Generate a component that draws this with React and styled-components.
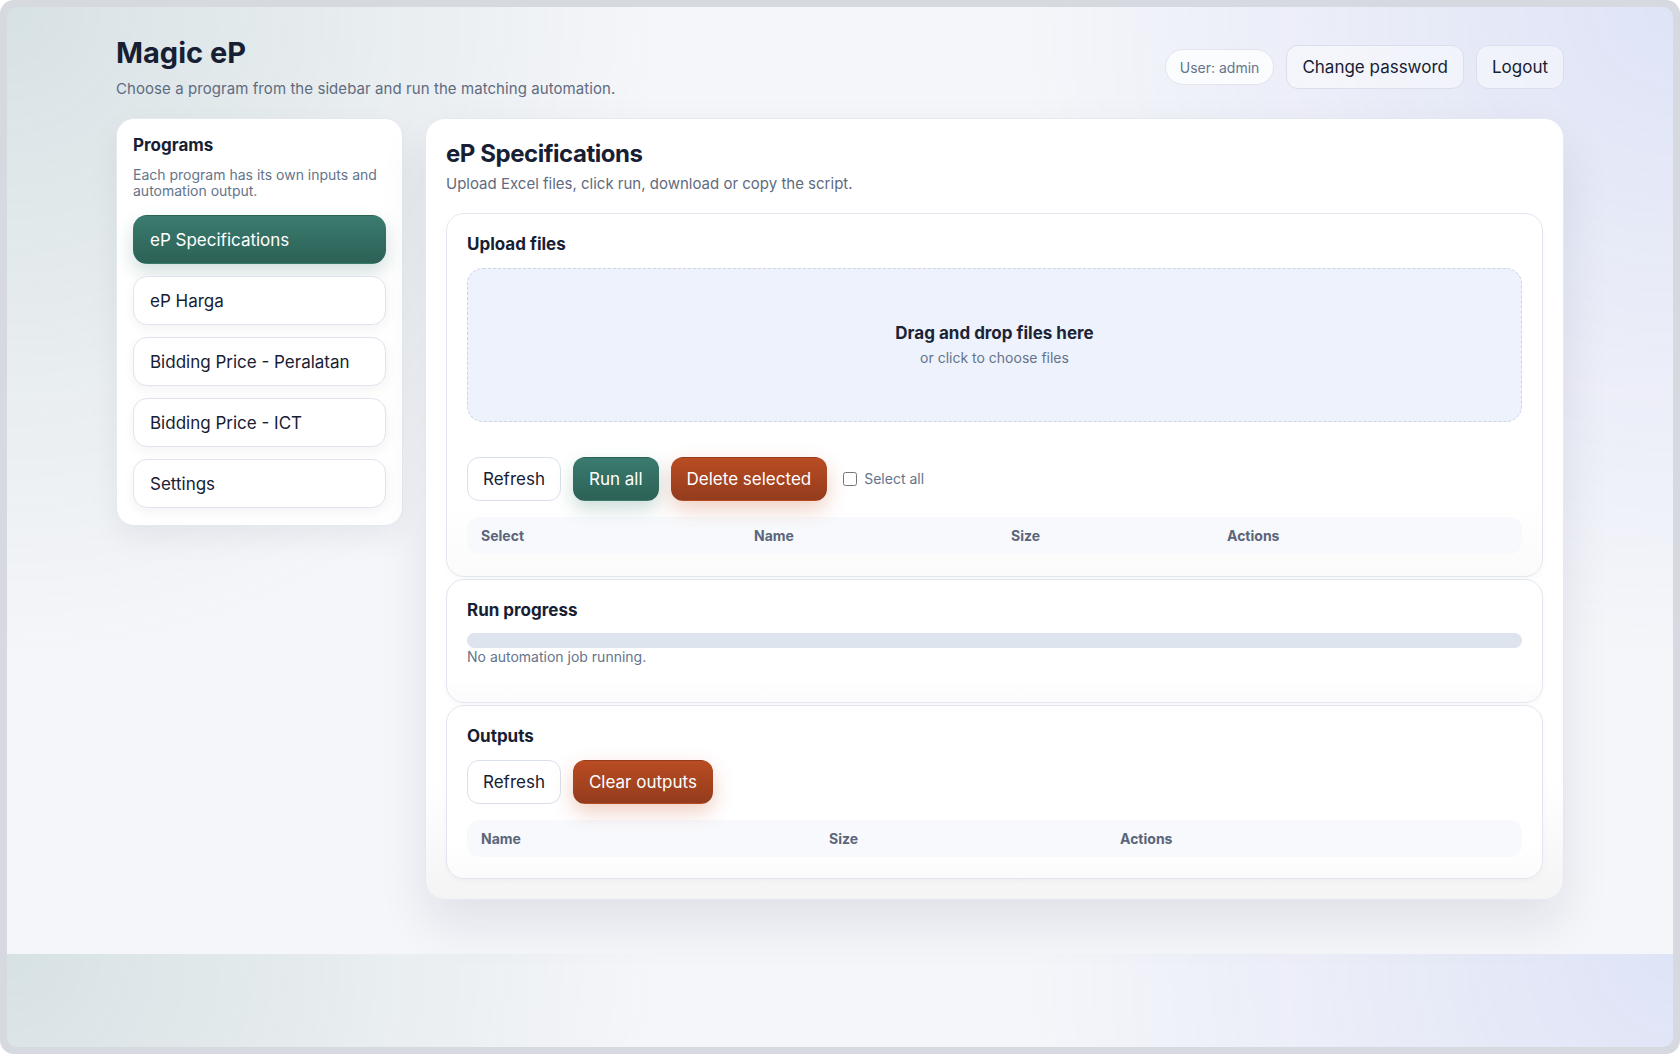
import React from "react";
import styled, { createGlobalStyle, css } from "styled-components";

const GlobalStyle = createGlobalStyle`
  html, body, #root {
    height: 100%;
  }
  body {
    margin: 0;
    background: #ffffff;
    font-family: Inter, "Noto Sans", "Liberation Sans", sans-serif;
    color: #172033;
    -webkit-font-smoothing: antialiased;
  }
  * {
    box-sizing: border-box;
  }
`;

const Frame = styled.div`
  height: 100%;
  padding: 7px;
  background: #d7d9e0;
  border-radius: 14px;
`;

const Viewport = styled.div`
  height: 100%;
  border-radius: 10px;
  overflow: hidden;
  background:
    radial-gradient(circle at 0 0, rgba(47, 111, 98, 0.15), rgba(47, 111, 98, 0) 34%),
    radial-gradient(circle at 100% 0, rgba(72, 104, 224, 0.13), rgba(72, 104, 224, 0) 34%),
    #f5f6fa;
  background-size: 100% 947px;
`;

const Page = styled.div`
  max-width: 1448px;
  margin: 0 auto;
  padding-top: 29px;
`;

const Header = styled.header`
  display: flex;
  align-items: center;
  justify-content: space-between;
  margin-bottom: 20px;
`;

const Brand = styled.h1`
  margin: 0;
  font-size: 29px;
  line-height: 34px;
  font-weight: 700;
  color: #172033;
`;

const Lead = styled.p`
  margin: 10px 0 0;
  font-size: 15px;
  line-height: 18px;
  letter-spacing: 0.07px;
  color: #5f6b80;
`;

const HeaderActions = styled.div`
  display: flex;
  align-items: center;
  gap: 12px;
`;

const UserPill = styled.span`
  display: inline-flex;
  align-items: center;
  height: 36px;
  padding: 0 14px;
  border: 1px solid #dfe4ee;
  border-radius: 999px;
  background: #fbfcfe;
  font-size: 14px;
  color: #64748b;
`;

const buttonTone = {
  ghost: css`
    background: rgba(255, 255, 255, 0.45);
    border-color: #d9dfec;
    color: #172033;
  `,
  secondary: css`
    background: #ffffff;
    border-color: #d9e0ec;
    color: #172033;
  `,
  primary: css`
    background: linear-gradient(180deg, #3b7b6f 0%, #2c6156 100%);
    border-color: transparent;
    color: #ffffff;
    box-shadow: 0 8px 18px rgba(47, 111, 98, 0.24);
  `,
  danger: css`
    background: linear-gradient(180deg, #b94c23 0%, #933c1d 100%);
    border-color: transparent;
    color: #ffffff;
    box-shadow: 0 8px 20px rgba(196, 82, 38, 0.28);
  `,
};

const Button = styled.button`
  height: 44px;
  padding: 0 15px;
  border: 1px solid transparent;
  border-radius: 12px;
  font-family: inherit;
  font-size: 17px;
  line-height: 1.2;
  cursor: pointer;
  ${({ $tone }) => buttonTone[$tone || "secondary"]}
`;

const Layout = styled.div`
  display: grid;
  grid-template-columns: 287px 1fr;
  gap: 22px;
  align-items: start;
`;

const Sidebar = styled.aside`
  padding: 16px 16px 17px;
  background: #ffffff;
  border: 1px solid #e3e8f1;
  border-radius: 18px;
  box-shadow: 0 12px 30px rgba(15, 23, 42, 0.06);
`;

const SideTitle = styled.h2`
  margin: 0;
  font-size: 17px;
  line-height: 21px;
  font-weight: 700;
`;

const SideNote = styled.p`
  margin: 11px 0 16px;
  font-size: 14px;
  line-height: 16px;
  color: #64748b;
`;

const NavList = styled.nav`
  display: flex;
  flex-direction: column;
  gap: 12px;
`;

const NavItem = styled.button`
  height: 49px;
  padding: 0 16px;
  text-align: left;
  font-family: inherit;
  font-size: 17px;
  border-radius: 14px;
  cursor: pointer;
  border: 1px solid ${({ $active }) => ($active ? "transparent" : "#dfe4ef")};
  color: ${({ $active }) => ($active ? "#ffffff" : "#172033")};
  background: ${({ $active }) =>
    $active ? "linear-gradient(180deg, #3b7b6f 0%, #2c6156 100%)" : "#ffffff"};
  box-shadow: ${({ $active }) =>
    $active ? "0 8px 18px rgba(47, 111, 98, 0.22)" : "0 4px 12px rgba(15, 23, 42, 0.05)"};
`;

const Panel = styled.main`
  padding: 20px;
  border: 1px solid #e3e8f1;
  border-radius: 20px;
  background: linear-gradient(180deg, #ffffff 0%, #ffffff 85%, #f4f4f5 100%);
  box-shadow: 0 24px 50px rgba(15, 23, 42, 0.09);
`;

const PanelTitle = styled.h2`
  margin: 0;
  padding-top: 1px;
  font-size: 24px;
  line-height: 1.2;
  font-weight: 700;
  letter-spacing: -0.45px;
`;

const PanelLead = styled.p`
  margin: 6px 0 20px;
  font-size: 15px;
  line-height: 18px;
  color: #5f6b80;
`;

const Sections = styled.div`
  display: flex;
  flex-direction: column;
  gap: 2px;
`;

const Section = styled.section`
  padding: ${({ $pad }) => $pad || "20px"};
  border: 1px solid #e1e6ef;
  border-radius: 18px;
  background: linear-gradient(180deg, #ffffff 0%, #ffffff 80%, #fbfbfc 100%);
  box-shadow: 0 2px 6px rgba(15, 23, 42, 0.03);
`;

const SectionTitle = styled.h3`
  margin: 0 0 14px;
  font-size: 17px;
  line-height: 20px;
  font-weight: 700;
`;

const DropZone = styled.div`
  height: 154px;
  display: flex;
  flex-direction: column;
  align-items: center;
  justify-content: center;
  border: 1.5px dashed #cbd4e6;
  border-radius: 16px;
  background: #eef2fc;
  cursor: pointer;
`;

const DropTitle = styled.div`
  font-size: 17px;
  line-height: 1.2;
  font-weight: 700;
  color: #1b2435;
`;

const DropHint = styled.div`
  margin-top: 6px;
  font-size: 14px;
  line-height: 17px;
  color: #64748b;
`;

const Toolbar = styled.div`
  display: flex;
  align-items: center;
  gap: 12px;
  margin-top: ${({ $top }) => $top || "0"};
`;

const CheckLabel = styled.label`
  display: inline-flex;
  align-items: center;
  gap: 7px;
  margin-left: 4px;
  font-size: 14px;
  color: #64748b;
`;

const Check = styled.input`
  width: 14px;
  height: 14px;
  margin: 0;
`;

const TableHead = styled.div`
  display: grid;
  grid-template-columns: ${({ $cols }) => $cols};
  margin-top: 16px;
  padding: 10px 14px;
  border-radius: 12px;
  background: #f7f9fd;
  font-size: 14px;
  line-height: 17px;
  font-weight: 700;
  color: #5b6579;
`;

const Track = styled.div`
  height: 15px;
  margin-top: -1px;
  border-radius: 999px;
  background: #dde4ee;
`;

const Status = styled.div`
  margin-bottom: 17px;
  font-size: 14px;
  line-height: 17px;
  color: #64748b;
`;

const programs = [
  "eP Specifications",
  "eP Harga",
  "Bidding Price - Peralatan",
  "Bidding Price - ICT",
  "Settings",
];

export default function App() {
  return (
    <>
      <GlobalStyle />
      <Frame>
        <Viewport>
          <Page>
            <Header>
              <div>
                <Brand>Magic eP</Brand>
                <Lead>Choose a program from the sidebar and run the matching automation.</Lead>
              </div>
              <HeaderActions>
                <UserPill>User: admin</UserPill>
                <Button $tone="ghost">Change password</Button>
                <Button $tone="ghost">Logout</Button>
              </HeaderActions>
            </Header>

            <Layout>
              <Sidebar>
                <SideTitle>Programs</SideTitle>
                <SideNote>Each program has its own inputs and automation output.</SideNote>
                <NavList>
                  {programs.map((name, i) => (
                    <NavItem key={name} $active={i === 0}>
                      {name}
                    </NavItem>
                  ))}
                </NavList>
              </Sidebar>

              <Panel>
                <PanelTitle>eP Specifications</PanelTitle>
                <PanelLead>Upload Excel files, click run, download or copy the script.</PanelLead>

                <Sections>
                  <Section $pad="20px 20px 22px">
                    <SectionTitle>Upload files</SectionTitle>
                    <DropZone>
                      <DropTitle>Drag and drop files here</DropTitle>
                      <DropHint>or click to choose files</DropHint>
                    </DropZone>
                    <Toolbar $top="35px">
                      <Button>Refresh</Button>
                      <Button $tone="primary">Run all</Button>
                      <Button $tone="danger">Delete selected</Button>
                      <CheckLabel>
                        <Check type="checkbox" />
                        Select all
                      </CheckLabel>
                    </Toolbar>
                    <TableHead $cols="273px 257px 216px 1fr">
                      <span>Select</span>
                      <span>Name</span>
                      <span>Size</span>
                      <span>Actions</span>
                    </TableHead>
                  </Section>

                  <Section>
                    <SectionTitle>Run progress</SectionTitle>
                    <Track />
                    <Status>No automation job running.</Status>
                  </Section>

                  <Section $pad="20px 20px 21px">
                    <SectionTitle>Outputs</SectionTitle>
                    <Toolbar>
                      <Button>Refresh</Button>
                      <Button $tone="danger">Clear outputs</Button>
                    </Toolbar>
                    <TableHead $cols="348px 291px 1fr">
                      <span>Name</span>
                      <span>Size</span>
                      <span>Actions</span>
                    </TableHead>
                  </Section>
                </Sections>
              </Panel>
            </Layout>
          </Page>
        </Viewport>
      </Frame>
    </>
  );
}
